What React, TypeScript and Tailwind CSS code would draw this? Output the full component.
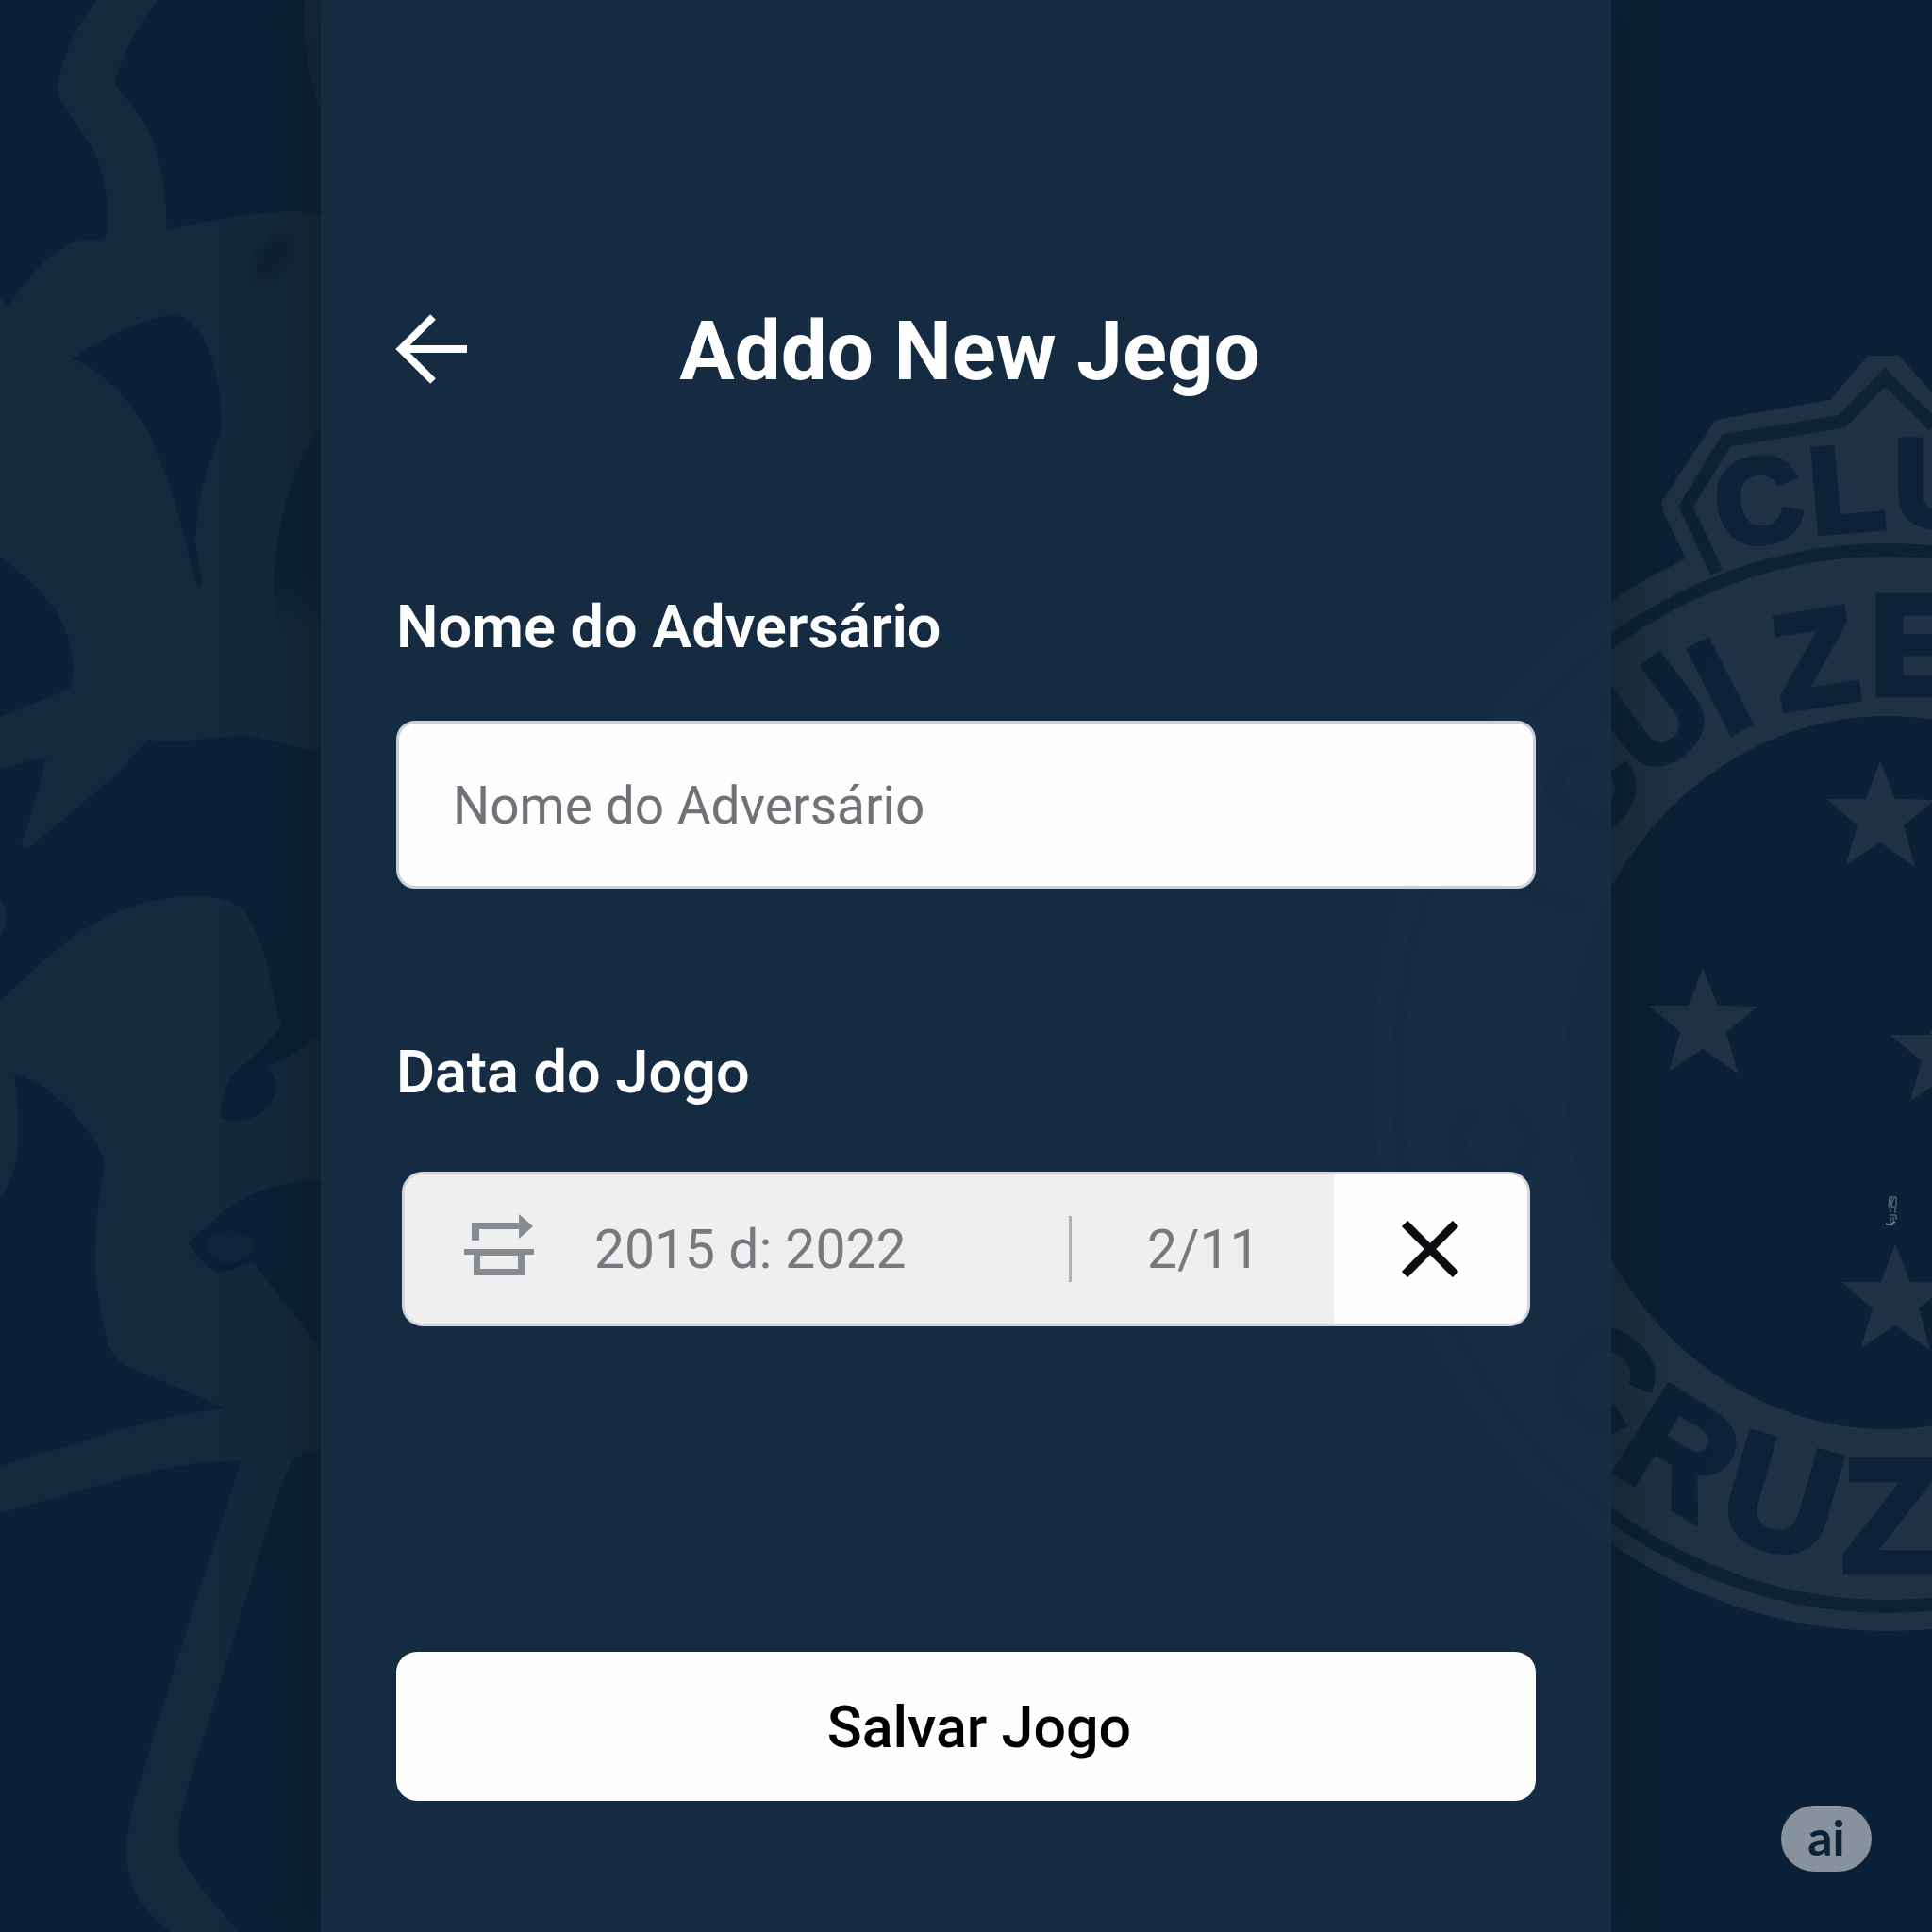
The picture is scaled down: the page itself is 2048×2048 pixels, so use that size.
import React from "react";

const STAR = "M0 0 L16 40 L58 41 L25 68 L37 112 L0 86 L-36 110 L-24 68 L-57 40 L-15 40 Z";

const STARS = [
  { x: 1993, y: 807 },
  { x: 1805, y: 1026 },
  { x: 2061, y: 1057 },
  { x: 2009, y: 1319 },
];

const LETTERS = [
  { c: "C", x: 1864, y: 531, r: -9, s: 126 },
  { c: "L", x: 1957, y: 518, r: -5, s: 128 },
  { c: "U", x: 2055, y: 512, r: 0, s: 130 },
  { c: "E", x: 2032, y: 684, r: 0, s: 150 },
  { c: "Z", x: 1924, y: 698, r: -9, s: 142 },
  { c: "I", x: 1823, y: 728, r: -27, s: 142 },
  { c: "U", x: 1754, y: 758, r: -37, s: 140 },
  { c: "C", x: 1684, y: 836, r: -58, s: 126 },
  { c: "I", x: 1640, y: 950, r: -72, s: 120 },
  { c: "C", x: 1583, y: 1215, r: -90, s: 130 },
  { c: "C", x: 1696, y: 1462, r: 38, s: 148 },
  { c: "R", x: 1780, y: 1539, r: 32, s: 156 },
  { c: "U", x: 1889, y: 1586, r: 16, s: 164 },
  { c: "Z", x: 2004, y: 1607, r: 0, s: 170 },
];

function Backdrop() {
  return (
    <svg
      aria-hidden="true"
      className="pointer-events-none absolute inset-0 h-full w-full"
      viewBox="0 0 2048 2048"
      preserveAspectRatio="xMidYMid slice"
    >
      <defs>
        <filter id="soft" x="-50%" y="-50%" width="200%" height="200%">
          <feGaussianBlur stdDeviation="4" />
        </filter>
        <linearGradient id="fadeDown" x1="0" y1="0" x2="0" y2="1">
          <stop offset="0.7" stopColor="#0a2137" />
          <stop offset="1" stopColor="#0a2137" stopOpacity="0" />
        </linearGradient>
      </defs>

      <g fill="#14293d">
        <path d="M102 0 Q70 42 61 90 Q59 100 66 107 Q76 124 87 140 Q112 175 113 215 L113 245 Q112 256 104 255 Q96 253 88 254 Q48 262 9 326 Q5 319 0 317 L0 591 Q74 640 77 705 Q78 728 72 731 L0 760 L0 816 Q24 807 49 803 Q43 830 35 856 Q28 880 23 893 Q23 900 30 899 Q78 860 122 822 L157 784 Q172 786 190 786 L260 779 L340 798 L340 227 Q320 224 303 224 Q230 230 177 244 Q177 200 165 157 Q150 118 123 92 Q120 88 124 80 Q140 32 167 0 Z" />
        <path d="M0 1062 Q22 1040 40 1024 Q88 980 133 963 Q170 950 207 950 Q240 950 257 963 Q268 974 284 1024 Q292 1070 298 1086 Q282 1112 247 1138 Q238 1150 233 1184 Q241 1191 262 1187 Q288 1178 293 1155 Q291 1140 283 1132 Q315 1116 340 1097 L340 1251 Q270 1254 230 1290 Q210 1308 200 1318 Q214 1342 233 1350 L267 1337 L340 1429 L340 1537 Q322 1538 313 1546 Q304 1558 293 1589 L207 1870 Q191 1920 189 1938 Q188 1952 191 1966 Q215 2010 255 2048 L180 2048 Q160 2034 147 2013 Q133 1985 134 1964 Q135 1935 143 1906 L187 1762 L256 1548 Q190 1550 133 1567 L0 1604 L0 1554 L133 1514 Q185 1498 240 1493 L130 1446 Q121 1440 115 1426 Q105 1390 101 1350 Q99 1295 111 1235 Q110 1226 104 1216 Q68 1156 15 1137 Q21 1180 19 1215 Q16 1250 0 1269 Z" />
        <path d="M323 0 Q320 70 340 118 L340 0 Z" />
        <path d="M0 953 Q14 972 0 993 Z" />
      </g>
      <path
        d="M77 380 Q130 344 180 334 Q208 334 224 378 Q235 415 235 451 Q234 462 230 470 Q208 520 207 575 L214 617 Q212 626 209 621 L200 588 Q184 520 160 464 Q126 400 77 380 Z"
        fill="#0a2137"
      />
      <path d="M340 453 Q298 510 290 610 Q289 640 296 670 L340 670 Z" fill="url(#fadeDown)" />
      <ellipse cx="288" cy="274" rx="28" ry="15" transform="rotate(-52 288 274)" fill="#0a2036" filter="url(#soft)" />
      <ellipse cx="244" cy="1322" rx="26" ry="16" fill="#10263b" filter="url(#soft)" />

      <g fill="#1e3244">
        <ellipse cx="2000" cy="1137" rx="545" ry="592" />
        <path d="M1813 640 L1789 596 L1763 543 L1761 532 L1818 446 L1825 444 L1940 424 L1980 377 L2013 377 L2048 416 L2048 640 Z" />
      </g>
      <g fill="none" stroke="#0c2237" strokeWidth="14">
        <ellipse cx="2000" cy="1143" rx="519" ry="560" />
        <path d="M1820 607 L1787 537 L1830 467 L1952 447 L1998 400 L2050 451" />
      </g>
      <ellipse cx="2000" cy="1137" rx="342" ry="378" fill="#0a2137" />
      <g fill="#1e3244">
        {STARS.map((s) => (
          <path key={s.y} d={STAR} transform={`translate(${s.x} ${s.y})`} />
        ))}
      </g>
      <g
        fill="#0b2238"
        stroke="#0b2238"
        strokeWidth="7"
        className="font-['Liberation_Sans',sans-serif] font-bold"
        textAnchor="middle"
      >
        {LETTERS.map((l) => (
          <text
            key={`${l.c}${l.x}`}
            fontSize={l.s}
            transform={`translate(${l.x} ${l.y}) rotate(${l.r})`}
            dy="0.345em"
          >
            {l.c}
          </text>
        ))}
      </g>

      <g fill="none" stroke="#8793a0" strokeWidth="1" opacity="0.8">
        <path d="M2003 1269 H2010 V1279 H2002 Z M2005 1270 V1278 M2008 1270 L2004 1278" />
        <path d="M2004 1282 V1285 M2009 1281 V1286 M2003 1288 H2010 V1293 M2004 1290 V1296 M2007 1290 V1296" />
        <path d="M1999 1297 Q2002 1300 2009 1295 M2000 1298 H2007" strokeWidth="2" />
      </g>
    </svg>
  );
}

function BackIcon() {
  return (
    <svg width="76" height="76" viewBox="0 0 76 76" fill="none" stroke="currentColor" strokeWidth="8" className="overflow-visible" aria-hidden="true">
      <path d="M39 4 L5 38 L39 72 M5 38 H75" />
    </svg>
  );
}

function SwapBoxIcon() {
  return (
    <svg width="74" height="66" viewBox="0 0 74 66" fill="#868b92" className="mb-2" aria-hidden="true">
      <path d="M8 9 H58 V0 L73 13 L58 26 V16 H16 V28 H8 Z" />
      <path fillRule="evenodd" d="M0 37 H74 V43 H64 V65 H10 V43 H0 Z M17 44 V58 H57 V44 Z" />
    </svg>
  );
}

function CloseIcon() {
  return (
    <svg width="60" height="60" viewBox="0 0 60 60" fill="none" stroke="currentColor" strokeWidth="9" aria-hidden="true">
      <path d="M3 3 L57 57 M57 3 L3 57" />
    </svg>
  );
}

export default function App() {
  return (
    <div className="relative flex min-h-screen justify-center overflow-hidden bg-[#0a2137] font-['Roboto',sans-serif]">
      <Backdrop />

      <main className="relative w-full max-w-[1368px] bg-[#172c43]/92 px-20 pt-80 pb-32 text-white shadow-[0_0_70px_rgba(11,28,38,0.9)]">
        <header className="relative flex h-[100px] items-center justify-center">
          <button type="button" aria-label="Voltar" className="absolute left-0">
            <BackIcon />
          </button>
          <h1 className="pt-1 pl-2 text-[87px] leading-[100px] font-bold">Addo New Jego</h1>
        </header>

        <form className="mt-[205px] flex flex-col" onSubmit={(e) => e.preventDefault()}>
          <label htmlFor="opponent" className="text-[63px] leading-[80px] font-semibold">
            Nome do Adversário
          </label>
          <input
            id="opponent"
            type="text"
            placeholder="Nome do Adversário"
            className="mt-[59px] h-[178px] w-full rounded-[20px] border-3 border-[#c9cfd8] bg-[#fefefe] px-[57px] pt-0.5 text-[55px] text-[#6f7377] outline-none placeholder:text-[#6f7377]"
          />

          <label htmlFor="date" className="mt-[155px] text-[63px] leading-[80px] font-semibold">
            Data do Jogo
          </label>
          <div className="mx-[6px] mt-[65px] flex h-[164px] overflow-hidden rounded-[22px] border-3 border-[#d3d7dd] bg-[#efefef] text-[57px] text-[#767a7f]">
            <div className="flex min-w-0 flex-1 items-center pl-[63px]">
              <SwapBoxIcon />
              <input
                id="date"
                type="text"
                defaultValue="2015 d: 2022"
                className="ml-16 min-w-0 flex-1 bg-transparent pt-0.5 outline-none"
              />
              <span className="h-[70px] w-[3px] bg-[#b0b3b6]" />
              <input
                type="text"
                aria-label="Dia e mês"
                defaultValue="2/11"
                className="w-[278px] bg-transparent pt-0.5 pl-20 outline-none"
              />
            </div>
            <button
              type="button"
              aria-label="Limpar data"
              className="flex w-[205px] items-center justify-center bg-[#fefefe] pr-0.5 text-[#0c0d10]"
            >
              <CloseIcon />
            </button>
          </div>

          <button
            type="submit"
            className="mt-[345px] h-[158px] w-full rounded-[22px] bg-[#fefefe] pt-1 pl-7 text-[61px] font-medium text-black"
          >
            Salvar Jogo
          </button>
        </form>
      </main>

      <span className="absolute right-16 bottom-16 flex h-[70px] w-24 items-center justify-center rounded-full bg-[#87929d] pb-1 font-['Lato',sans-serif] text-[52px] leading-none font-bold text-[#0c2237]">
        ai
      </span>
    </div>
  );
}
